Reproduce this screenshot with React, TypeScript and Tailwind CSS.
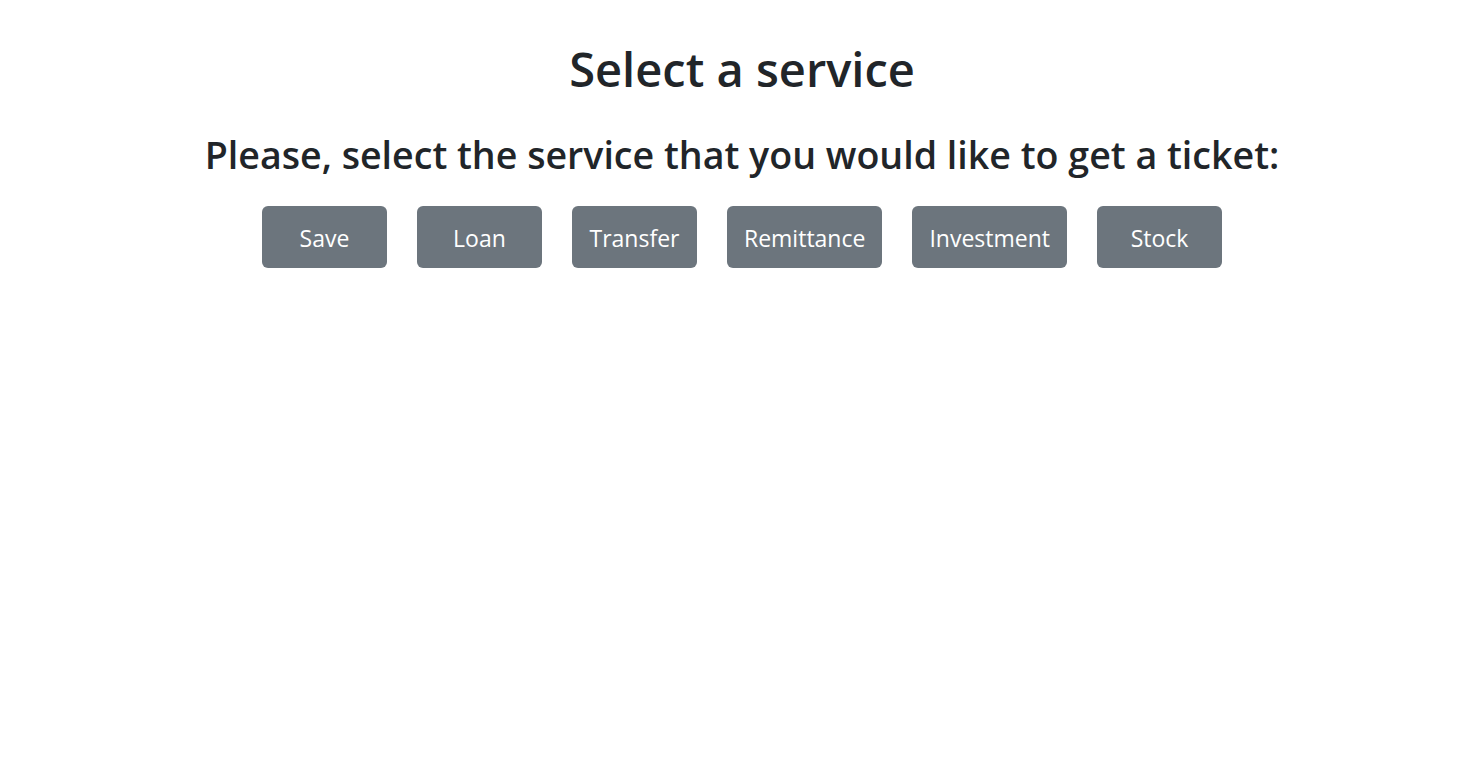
const services = ['Save', 'Loan', 'Transfer', 'Remittance', 'Investment', 'Stock']

export default function App() {
  return (
    <div className="min-h-screen bg-white text-[#212529] font-['Open_Sans',sans-serif]">
      <div className="flex flex-col items-center pl-[8px] pt-[42px]">
        <h1 className="h-[55px] text-[47px] font-semibold leading-[55px]">Select a service</h1>
        <h2 className="mt-[36px] h-[44px] text-[37.6px] font-semibold leading-[44px]">
          Please, select the service that you would like to get a ticket:
        </h2>
        <div className="mt-[29px] flex gap-[30px]">
          {services.map((s) => (
            <button
              key={s}
              className="h-[62px] min-w-[125px] rounded-md bg-[#6c757d] px-[17px] pt-[3px] text-[23px] text-white"
            >
              {s}
            </button>
          ))}
        </div>
      </div>
    </div>
  )
}
